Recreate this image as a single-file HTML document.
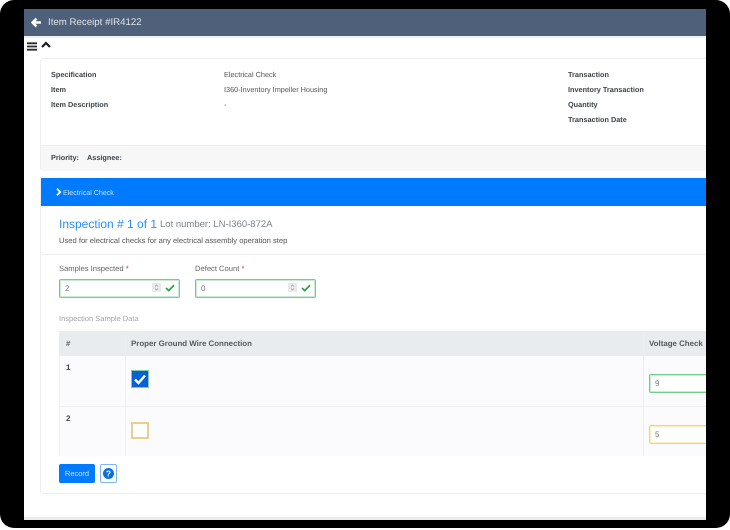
<!DOCTYPE html>
<html><head><meta charset="utf-8">
<style>
html,body{margin:0;padding:0;width:730px;height:530px;overflow:hidden;background:#fff}
#frame{position:absolute;left:0;top:0;width:730px;height:528px;background:#000;border-radius:14px}
#s{position:absolute;left:24px;top:9px;width:682px;height:511px;background:#fff;overflow:hidden;font-family:"Liberation Sans",sans-serif;color:#333;text-rendering:geometricPrecision}
#s div,#s svg{position:absolute}
.t{white-space:nowrap;font-size:7.3px;line-height:10px}
.b{font-weight:bold;color:#3d4349}
.g{box-sizing:border-box;border:1px solid #74cc8b;box-shadow:inset 0 0 0 1px #c6ecd1;border-radius:2px;background:#fff}
.y{box-sizing:border-box;border:1px solid #f5d868;box-shadow:inset 0 0 0 1px #fbeebb;border-radius:2px;background:#fff}
.sp{width:9px;height:9px;background:#e9e9e9}
</style></head><body>
<div id="frame"></div>
<div id="s">
<div style="left:0;top:0;width:682px;height:27px;background:#4f617a"></div>
<div style="left:0;top:27px;width:682px;height:2px;background:#f1f2f4"></div>
<svg style="left:7px;top:8px" width="11" height="11" viewBox="0 0 11 11"><path d="M5.5 1.5L1.5 5.5L5.5 9.5M2 5.5H10" fill="none" stroke="#fff" stroke-width="2.4"/></svg>
<div class="t" style="left:24px;top:8px;font-size:9.7px;line-height:12px;color:#dfe3e8">Item Receipt #IR4122</div>
<svg style="left:3px;top:33px" width="10" height="9" viewBox="0 0 10 9"><path d="M0 1.3H10M0 4.5H10M0 7.7H10" stroke="#2b2b2b" stroke-width="1.8"/></svg>
<svg style="left:17px;top:32px" width="10" height="8" viewBox="0 0 10 8"><path d="M1 6L5 2L9 6" fill="none" stroke="#1c1c1c" stroke-width="2.2"/></svg>

<div style="left:16px;top:49px;width:670px;height:111px;border:1px solid #eceeef;border-radius:3px;background:#fff"></div>
<div style="left:17px;top:136px;width:665px;height:25px;background:#f7f7f7;border-top:1px solid #eceeef"></div>
<div class="t b" style="left:27px;top:61px">Specification</div>
<div class="t b" style="left:27px;top:76px">Item</div>
<div class="t b" style="left:27px;top:91px">Item Description</div>
<div class="t" style="left:200px;top:61px;color:#555">Electrical Check</div>
<div class="t" style="left:200px;top:76px;color:#555">I360-Inventory Impeller Housing</div>
<div class="t" style="left:200px;top:91px;color:#555">-</div>
<div class="t b" style="left:544px;top:61px">Transaction</div>
<div class="t b" style="left:544px;top:76px">Inventory Transaction</div>
<div class="t b" style="left:544px;top:91px">Quantity</div>
<div class="t b" style="left:544px;top:106px">Transaction Date</div>
<div class="t b" style="left:27px;top:144px">Priority:</div>
<div class="t b" style="left:63px;top:144px">Assignee:</div>

<div style="left:16px;top:169px;width:670px;height:314px;border:1px solid #eceeef;border-radius:3px;background:#fff"></div>
<div style="left:17px;top:169px;width:665px;height:28px;background:#007bff"></div>
<svg style="left:32px;top:179px" width="6" height="8" viewBox="0 0 6 8"><path d="M1 0.8L4.2 4L1 7.2" fill="none" stroke="#fff" stroke-width="1.8"/></svg>
<div class="t" style="left:39px;top:179px;font-size:7.1px;color:#cfe4ff">Electrical Check</div>
<div class="t" style="left:35px;top:207px;font-size:12px;line-height:16px;color:#2b8fff">Inspection # 1 of 1</div>
<div class="t" style="left:136px;top:209px;font-size:9.5px;line-height:13px;color:#7a828a">Lot number: LN-I360-872A</div>
<div class="t" style="left:35px;top:227px;font-size:7.6px;color:#555">Used for electrical checks for any electrical assembly operation step</div>
<div style="left:17px;top:245px;width:665px;height:1px;background:#eceeef"></div>

<div class="t" style="left:35px;top:255px;font-size:7.6px;color:#666">Samples Inspected <span style="color:#dc3545">*</span></div>
<div class="t" style="left:171px;top:255px;font-size:7.6px;color:#666">Defect Count <span style="color:#dc3545">*</span></div>
<div class="g" style="left:35px;top:270px;width:121px;height:19px"></div>
<div class="g" style="left:171px;top:270px;width:121px;height:19px"></div>
<div class="t" style="left:41px;top:275px;font-size:8px;color:#777">2</div>
<div class="t" style="left:177px;top:275px;font-size:8px;color:#777">0</div>
<div class="sp" style="left:128px;top:274px"></div>
<div class="sp" style="left:264px;top:274px"></div>
<svg style="left:128px;top:274px" width="9" height="9" viewBox="0 0 9 9"><path d="M3 3.5L4.5 2L6 3.5M3 5.5L4.5 7L6 5.5" fill="none" stroke="#999" stroke-width=".7"/></svg>
<svg style="left:264px;top:274px" width="9" height="9" viewBox="0 0 9 9"><path d="M3 3.5L4.5 2L6 3.5M3 5.5L4.5 7L6 5.5" fill="none" stroke="#999" stroke-width=".7"/></svg>
<svg style="left:141px;top:275px" width="10" height="8" viewBox="0 0 10 8"><path d="M1 4L3.7 6.6L9 1.2" fill="none" stroke="#28a745" stroke-width="1.8"/></svg>
<svg style="left:277px;top:275px" width="10" height="8" viewBox="0 0 10 8"><path d="M1 4L3.7 6.6L9 1.2" fill="none" stroke="#28a745" stroke-width="1.8"/></svg>
<div class="t" style="left:35px;top:305px;font-size:7.5px;color:#a5a5a5">Inspection Sample Data</div>

<div style="left:35px;top:322px;width:647px;height:25px;background:#e9ecef"></div>
<div style="left:35px;top:347px;width:647px;height:100px;background:#fbfbfd"></div>
<div style="left:35px;top:397px;width:647px;height:1px;background:#eef0f2"></div>
<div style="left:35px;top:347px;width:1px;height:100px;background:#eef0f2"></div>
<div style="left:101px;top:322px;width:1px;height:125px;background:#eceef0"></div>
<div style="left:619px;top:322px;width:1px;height:125px;background:#eceef0"></div>
<div class="t b" style="left:42px;top:330px;font-size:7.8px;color:#53595f">#</div>
<div class="t b" style="left:107px;top:330px;font-size:7.9px;color:#53595f">Proper Ground Wire Connection</div>
<div class="t b" style="left:625px;top:330px;font-size:7.9px;color:#53595f">Voltage Check</div>
<div class="t b" style="left:42px;top:354px;font-size:8px">1</div>
<div class="t b" style="left:42px;top:405px;font-size:8px">2</div>
<div style="left:107px;top:361px;box-sizing:border-box;width:18px;height:18px;border:1px solid #7fcfa0;background:#0a5fd6"></div>
<svg style="left:109px;top:363px" width="14" height="14" viewBox="0 0 14 14"><path d="M2 7.5L5.5 11L12 3.5" fill="none" stroke="#fff" stroke-width="2.4"/></svg>
<div style="left:107px;top:413px;box-sizing:border-box;width:18px;height:17px;border:2px solid #e6cf8f;background:#fff"></div>
<div class="g" style="left:625px;top:365px;width:80px;height:19px"></div>
<div class="y" style="left:625px;top:416px;width:80px;height:19px"></div>
<div class="t" style="left:631px;top:370px;font-size:8px;color:#777">9</div>
<div class="t" style="left:631px;top:421px;font-size:8px;color:#777">5</div>

<div style="left:35px;top:455px;width:36px;height:19px;background:#007bff;border-radius:2px"></div>
<div class="t" style="left:35px;top:460px;width:36px;text-align:center;font-size:7.5px;color:#cfe4ff">Record</div>
<div style="left:76px;top:455px;box-sizing:border-box;width:17px;height:19px;border:1px solid #7db8f5;border-radius:2px;background:#fff"></div>
<svg style="left:79px;top:459px" width="11" height="11" viewBox="0 0 11 11"><circle cx="5.5" cy="5.5" r="5.5" fill="#0a6fe0"/><text x="5.5" y="8.6" text-anchor="middle" font-family="Liberation Sans" font-weight="bold" font-size="8.5" fill="#fff">?</text></svg>
<div style="left:0;top:508px;width:682px;height:3px;background:#eaeaea"></div>
</div>
</body></html>
